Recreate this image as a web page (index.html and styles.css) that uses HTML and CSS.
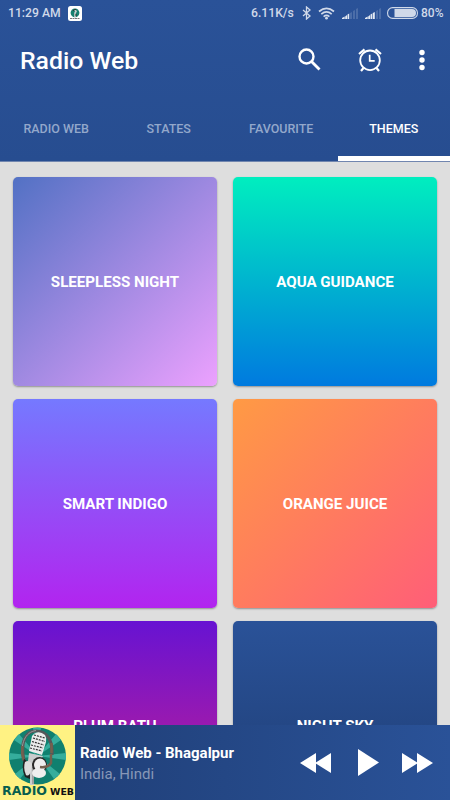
FILE: index.html
```html
<!DOCTYPE html>
<html lang="en">

<head>
    <meta charset="UTF-8">
    <meta name="viewport" content="width=device-width, initial-scale=1.0">
    <title>Radio Web</title>
    <link rel="stylesheet" href="styles.css">
</head>

<body>
    <header class="header">
        <div class="status">
            <span class="clock">11:29 AM</span>
            <svg class="notif" width="14" height="15" viewBox="0 0 14 15">
                <rect width="14" height="15" rx="2.5" fill="#fff" />
                <circle cx="7" cy="6.8" r="4.4" fill="#16806f" />
                <path d="M7 4l1 1.500-1 1.500v4" stroke="#ccc" stroke-width="1.6" fill="none" />
                <path d="M5 5q1-2 3-1.500M8 8v2" stroke="#333" fill="none" />
                <path d="M2 12.500h10" stroke="#555" stroke-width=".8" stroke-dasharray="2 .5" />
            </svg>
            <span class="speed">6.11K/s</span>
            <svg class="bluetooth" width="9" height="14" viewBox="0 0 9 14" fill="none" stroke="#d0d9e9" stroke-width="1.3">
                <path d="M1 4l7 6-3.500 3V1L8 4l-7 6" />
            </svg>
            <svg class="wifi" width="17" height="13" viewBox="0 0 17 13" fill="none" stroke="#d0d9e9" stroke-width="1.7">
                <path d="M1 4.500Q8.500-1.900 16 4.500M3.300 7.100Q8.500 2.700 13.700 7.100M5.600 9.600Q8.500 7.300 11.400 9.600" />
                <circle cx="8.500" cy="11.200" r="1.400" fill="#d0d9e9" stroke="none" />
            </svg>
            <svg class="signal" width="16" height="11" viewBox="0 0 16 11">
                <path d="M0 11v-1l2.700-1.500V11zM3.200 11V8.500L5 7v4zM5.500 11V6.500L7.200 5.500V11z" fill="#e3e9f3" />
                <path d="M8 11V5l2-1v7zM11 11V3l2-1v9zM14 11V1l2-1v11z" fill="#4b6da8" />
            </svg>
            <svg class="signal" width="16" height="11" viewBox="0 0 16 11">
                <path d="M0 11v-1l2.700-1.500V11zM3.200 11V8.500L5 7v4zM5.500 11V6.500L7.200 5.500V11zM7.800 11V5l2-1v7z" fill="#e3e9f3" />
                <path d="M11 11V3l2-1v9zM14 11V1l2-1v11z" fill="#4b6da8" />
            </svg>
            <svg class="battery" width="31" height="12" viewBox="0 0 31 12">
                <rect x=".6" y=".6" width="29.800" height="10.800" rx="5" fill="none" stroke="#d0d9e9" stroke-width="1.100" />
                <path d="M7.500 2H25a4 4 0 0 1 0 8H7.500z" fill="#d0d9e9" />
            </svg>
            <span class="percent">80%</span>
        </div>

        <div class="toolbar">
            <h1 class="title">Radio Web</h1>
            <svg class="search" width="24" height="24" viewBox="0 0 24 24" fill="none" stroke="#fff">
                <circle cx="8.500" cy="8.500" r="7" stroke-width="2.400" />
                <path d="M13.500 13.500l8 8" stroke-width="2.800" />
            </svg>
            <svg class="alarm" width="24" height="24" viewBox="0 0 24 24" fill="none" stroke="#fff">
                <circle cx="12" cy="12.300" r="9.800" stroke-width="1.800" />
                <path d="M11.700 6.800v6h5" stroke-width="1.700" />
                <path d="M1 6l5.500-4.600M17.500 1.400L23 6M5.500 20L3 23M18.500 20l2.500 3" stroke-width="2.200" />
            </svg>
            <svg class="more" width="6" height="22" viewBox="0 0 6 22" fill="#fff">
                <circle cx="3" cy="3.500" r="2.700" />
                <circle cx="3" cy="11" r="2.700" />
                <circle cx="3" cy="18.500" r="2.700" />
            </svg>
        </div>

        <nav class="tabs">
            <span class="tab">RADIO WEB</span>
            <span class="tab">STATES</span>
            <span class="tab">FAVOURITE</span>
            <span class="tab active">THEMES</span>
        </nav>
    </header>

    <main class="themes">
        <div class="theme sleepless">SLEEPLESS NIGHT</div>
        <div class="theme aqua">AQUA GUIDANCE</div>
        <div class="theme indigo">SMART INDIGO</div>
        <div class="theme orange">ORANGE JUICE</div>
        <div class="theme plum">PLUM BATH</div>
        <div class="theme night">NIGHT SKY</div>
    </main>

    <footer class="player">
        <svg class="cover" width="75" height="75" viewBox="0 0 75 75">
            <rect width="75" height="75" fill="#fff283" />
            <circle cx="37.500" cy="31" r="28.500" fill="#10806f" />
            <path d="M37.500 31L33 2.800h8zM37.500 31L56 9l5 6zM37.500 31L66 28v7zM37.500 31L60 49l-6 5zM37.500 31L20 54l-5-5zM37.500 31L9 35v-7zM37.500 31L14 15l5-6z" fill="#35ad9c" />
            <!-- headphones -->
            <path d="M24 36C20 18 25 6 36 6c11 0 17 10 16 24" fill="none" stroke="#55575a" stroke-width="3.200" />
            <path d="M23 34C20 19 25 7 36 5.500" fill="none" stroke="#999" stroke-width="1" />
            <path d="M22.500 21q-1 7 1 14M51.500 18v10" fill="none" stroke="#75604e" stroke-width="2.500" />
            <path d="M24 34q-3 10 1 18l5 2V38z" fill="#222" />
            <!-- microphone -->
            <path d="M29 28l14 3-4 8-5 4v17h-4V42l-2-6z" fill="#c9cccd" />
            <path d="M33 42v17" stroke="#777" />
            <path d="M32 11q6-7 13-1 2 3 1 7l-4 13-13-4z" fill="#ececec" />
            <path d="M34 10l11 3M33 13l12 3.500M32 16.500l12 3.500M31 20l12 3M30 23l12 3" stroke="#333" stroke-width="1.200" stroke-dasharray="2 1" />
            <path d="M25 37q4-3 7 2l-1 7q-2 6-5 4-3-6-1-13z" fill="#ddd" />
            <!-- front ear cup -->
            <ellipse cx="39.500" cy="40" rx="7.500" ry="8" fill="#292929" />
            <ellipse cx="40" cy="40" rx="6" ry="6.500" fill="#eee" />
            <ellipse cx="39" cy="48" rx="7" ry="5" fill="#eee" />
            <path d="M40 42q8 1 11-4V29" fill="none" stroke="#75604e" stroke-width="2.500" />
            <text class="logo-radio" x="2" y="70" textLength="45" lengthAdjust="spacingAndGlyphs">RADIO</text>
            <text class="logo-web" x="50" y="70" textLength="24" lengthAdjust="spacingAndGlyphs">WEB</text>
        </svg>
        <div class="track">
            <div class="station">Radio Web - Bhagalpur</div>
            <div class="place">India, Hindi</div>
        </div>
        <div class="controls">
            <svg width="31" height="20" viewBox="0 0 31 20" fill="#fff">
                <path d="M16 0v20L0 10zM31 0v20L15 10z" />
            </svg>
            <svg class="play" width="21" height="27" viewBox="0 0 21 27" fill="#fff">
                <path d="M0 0l21 13.500L0 27z" />
            </svg>
            <svg width="31" height="20" viewBox="0 0 31 20" fill="#fff">
                <path d="M0 0l16 10L0 20zM15 0l16 10-16 10z" />
            </svg>
        </div>
    </footer>
</body>

</html>
```
FILE: styles.css
```css
* {
    box-sizing: border-box;
}

body {
    margin: 0;
    height: 800px;
    display: flex;
    flex-direction: column;
    overflow: hidden;
    background: #dedede;
    font-family: Roboto, sans-serif;
}

svg {
    display: block;
    flex: none;
}

/* Header */
.header {
    flex: none;
    height: 162px;
    background: linear-gradient(#2a5298, #274d90);
    border-bottom: 1px solid #7186af;
    color: #fff;
}

.status {
    display: flex;
    align-items: center;
    height: 26px;
    padding-left: 8px;
    font-size: 12.2px;
    font-weight: 500;
    color: #d0d9e9;
    white-space: nowrap;
}

.clock {
    width: 60px;
}

.speed {
    width: 51px;
    margin-left: 169px;
}

.wifi {
    margin-left: 7px;
}

.signal {
    margin: 0 0 0 7px;
}

.battery {
    margin-left: 6px;
}

.percent {
    margin-left: 3px;
    font-size: 12px;
}

.toolbar {
    display: flex;
    align-items: center;
    height: 68px;
    padding-left: 20px;
}

.title {
    width: 278px;
    margin: 1px 0 0;
    font-size: 24.8px;
    font-weight: 500;
}

.alarm {
    margin-left: 36px;
}

.more {
    margin-left: 37px;
}

/* Tabs */
.tabs {
    display: grid;
    grid-template-columns: repeat(4, 1fr);
    height: 67px;
}

.tab {
    padding-top: 27px;
    font-size: 12.5px;
    line-height: 16px;
    font-weight: 500;
    text-align: center;
    color: #93a8cb;
}

.active {
    color: #fff;
    border-bottom: 5px solid #fff;
}

/* Theme cards */
.themes {
    flex: 1;
    min-height: 0;
    overflow: hidden;
    display: grid;
    grid-template-columns: 204px 204px;
    grid-auto-rows: 209px;
    gap: 13px 16px;
    padding: 15px 13px 0;
}

.theme {
    display: flex;
    align-items: center;
    justify-content: center;
    border-radius: 5px;
    box-shadow: 0 1px 2px rgba(0, 0, 0, .35);
    color: #fff;
    font-size: 15.1px;
    font-weight: 700;
}

.sleepless {
    background: linear-gradient(135deg, #5271c4, #eca1fe);
}

.aqua {
    background: linear-gradient(#00eebf, #007adf);
}

.indigo {
    background: linear-gradient(#7579ff, #b224ef);
}

.orange {
    background: linear-gradient(135deg, #ff9a44, #ff5e78);
}

.plum {
    background: linear-gradient(#6713d2, #cc208e);
}

.night {
    background: linear-gradient(#2a5298, #1e3c72);
}

/* Player */
.player {
    flex: none;
    display: flex;
    height: 75px;
    background: linear-gradient(90deg, #1e3c72, #2a5298);
    color: #fff;
}

.logo-radio,
.logo-web {
    font-family: "DejaVu Sans", sans-serif;
    font-weight: 700;
}

.logo-radio {
    font-size: 11.5px;
    fill: #075e4e;
}

.logo-web {
    font-size: 8px;
    fill: #111;
}

.track {
    width: 225px;
    padding: 18px 0 0 5px;
    line-height: 21px;
    white-space: nowrap;
}

.station {
    font-size: 15px;
    font-weight: 700;
}

.place {
    font-size: 15px;
    color: #8797b7;
}

.controls {
    display: flex;
    align-items: center;
}

.play {
    margin: 0 23px 0 27px;
}
```
